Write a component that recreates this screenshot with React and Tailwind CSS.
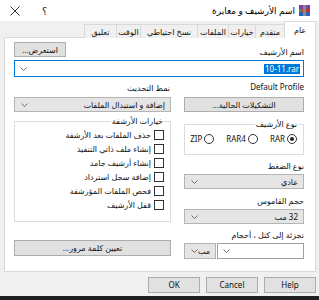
import React from "react";

const Chevron = () => (
  <svg width="7" height="4" viewBox="0 0 7 4" className="shrink-0">
    <path d="M0.5 0.5 L3.5 3.5 L6.5 0.5" fill="none" stroke="#6d6d6d" strokeWidth="1" />
  </svg>
);

function Select({ text, className = "" }) {
  return (
    <div className={`h-[15px] flex items-center justify-between border border-[#b4b4b4] bg-[#e5e5e5] pr-[5px] pl-[6px] ${className}`}>
      <span>{text}</span>
      <Chevron />
    </div>
  );
}

function Button({ children, className = "" }) {
  return (
    <div className={`h-[15px] flex items-center justify-center border border-[#adadad] bg-[#e1e1e1] ${className}`}>
      {children}
    </div>
  );
}

function Radio({ label, checked }) {
  return (
    <div className="flex items-center gap-[2px]">
      <span className="w-[10px] h-[10px] rounded-full border border-[#333] bg-white flex items-center justify-center">
        {checked && <span className="w-[4px] h-[4px] rounded-full bg-[#222]" />}
      </span>
      <span dir="ltr">{label}</span>
    </div>
  );
}

function Check({ label }) {
  return (
    <div className="h-[14px] flex items-center gap-[3px]">
      <span className="w-[10px] h-[10px] border border-[#333] bg-white" />
      <span>{label}</span>
    </div>
  );
}

const tabs = [
  { t: "عام", w: "w-[32px]", on: true },
  { t: "متقدم", w: "w-[30px]" },
  { t: "خيارات", w: "w-[28px]" },
  { t: "الملفات", w: "w-[32px]" },
  { t: "نسخ احتياطي", w: "w-[58px]" },
  { t: "الوقت", w: "w-[25px]" },
  { t: "تعليق", w: "w-[33px]" },
];

const options = [
  "حذف الملفات بعد الأرشفة",
  "إنشاء ملف ذاتي التنفيذ",
  "إنشاء أرشيف جامد",
  "إضافة سجل استرداد",
  "فحص الملفات المؤرشفة",
  "قفل الأرشيف",
];

export default function App() {
  return (
    <div className="w-[319px] h-[300px] overflow-hidden flex flex-col bg-[#f0f0f0] text-[8px] leading-none text-[#111] font-['Noto_Sans','DejaVu_Sans',sans-serif]">
      {/* title bar */}
      <div dir="rtl" className="h-[21px] shrink-0 bg-white flex items-center justify-between pr-[9px] pl-[10px]">
        <div className="flex items-center gap-[4px]">
          <svg width="11" height="11" viewBox="0 0 11 11">
            <rect x="0" y="0" width="11" height="4" fill="#7a3fa0" />
            <rect x="0" y="4" width="11" height="3" fill="#c8322c" />
            <rect x="0" y="7" width="11" height="4" fill="#2a62b8" />
            <rect x="4" y="0" width="3" height="11" fill="#8a8a8a" />
            <rect x="0" y="4" width="3" height="3" fill="#3b9a3b" />
          </svg>
          <span className="text-[9px] text-black">اسم الأرشيف و معايرة</span>
        </div>
        <div className="flex items-center gap-[22px] text-[#222]">
          <span className="text-[10px]">؟</span>
          <svg width="10" height="10" viewBox="0 0 10 10">
            <path d="M0.5 0.5 L9.5 9.5 M9.5 0.5 L0.5 9.5" stroke="#333" strokeWidth="1" />
          </svg>
        </div>
      </div>

      {/* tabs */}
      <div dir="rtl" className="h-[17px] shrink-0 flex items-end pr-[3px] relative z-10 -mb-px">
        {tabs.map((tab) => (
          <div
            key={tab.t}
            className={`${tab.w} shrink-0 flex items-center justify-center border border-[#d9d9d9] whitespace-nowrap -ml-px ${
              tab.on ? "h-[17px] bg-white border-b-0" : "h-[14px] bg-[#f0f0f0] border-b-0"
            }`}
          >
            {tab.t}
          </div>
        ))}
      </div>

      {/* panel */}
      <div dir="rtl" className="h-[235px] shrink-0 ml-[4px] mr-[3px] bg-white border border-[#d9d9d9] pt-[5px] pr-[11px] pl-[9px]">
        <div className="flex justify-between items-end h-[14px]">
          <span className="mb-[1px]">اسم الأرشيف</span>
          <Button className="w-[52px]">استعرض...</Button>
        </div>
        <div className="mt-[3px] h-[17px] flex items-center justify-between border border-[#0078d7] bg-white pr-[3px] pl-[5px]">
          <span dir="ltr" className="bg-[#0078d7] text-white px-[1px] py-[1px]">10-11.rar</span>
          <Chevron />
        </div>

        <div className="mt-[5px] flex gap-[13px]">
          {/* right column */}
          <div className="w-[120px] shrink-0 flex flex-col">
            <span dir="ltr" className="text-right h-[10px] mt-[1px]">Default Profile</span>
            <Button className="mt-[4px] h-[14px]">التشكيلات الحالية...</Button>
            <fieldset className="mt-[8px] border border-[#dcdcdc] h-[35px] pr-[6px] pl-[4px]">
              <legend className="px-[1px] mr-[-1px]">نوع الأرشيف</legend>
              <div className="flex items-center gap-[12px] mt-[6px]">
                <Radio label="RAR" checked />
                <Radio label="RAR4" />
                <Radio label="ZIP" />
              </div>
            </fieldset>
            <span className="mt-[7px] h-[10px]">نوع الضغط</span>
            <Select className="mt-[2px]" text="عادي" />
            <span className="mt-[8px] h-[10px]">حجم القاموس</span>
            <Select className="mt-[2px]" text="32 مب" />
            <span className="mt-[7px] h-[10px]">تجزئة إلى كتل ، أحجام</span>
            <div className="mt-[2px] flex gap-[1px]">
              <div className="w-[87px] h-[16px] flex items-center justify-end border border-[#a0a0a0] bg-white pl-[5px]">
                <Chevron />
              </div>
              <Select className="flex-1 h-[16px] pr-[3px] pl-[4px]" text="مب" />
            </div>
          </div>

          {/* left column */}
          <div className="flex-1 flex flex-col">
            <span className="h-[10px] mt-[2px] pr-[1px]">نمط التحديث</span>
            <Select className="mt-[3px]" text="إضافة و استبدال الملفات" />
            <fieldset className="mt-[5px] border border-[#dcdcdc] h-[105px] pr-[6px] pt-[3px]">
              <legend className="px-[1px]">خيارات الأرشفة</legend>
              {options.map((o) => (
                <Check key={o} label={o} />
              ))}
            </fieldset>
            <Button className="mt-[18px] h-[16px]">تعيين كلمة مرور...</Button>
          </div>
        </div>
      </div>

      {/* dialog buttons */}
      <div className="mt-[5px] flex justify-end gap-[6px] pr-[3px]">
        <Button className="w-[52px] h-[16px] border-[#0078d7]">OK</Button>
        <Button className="w-[52px] h-[16px]">Cancel</Button>
        <Button className="w-[52px] h-[16px]">Help</Button>
      </div>
      <div className="mt-auto h-[4px] bg-[#1f1f1f]" />
    </div>
  );
}
